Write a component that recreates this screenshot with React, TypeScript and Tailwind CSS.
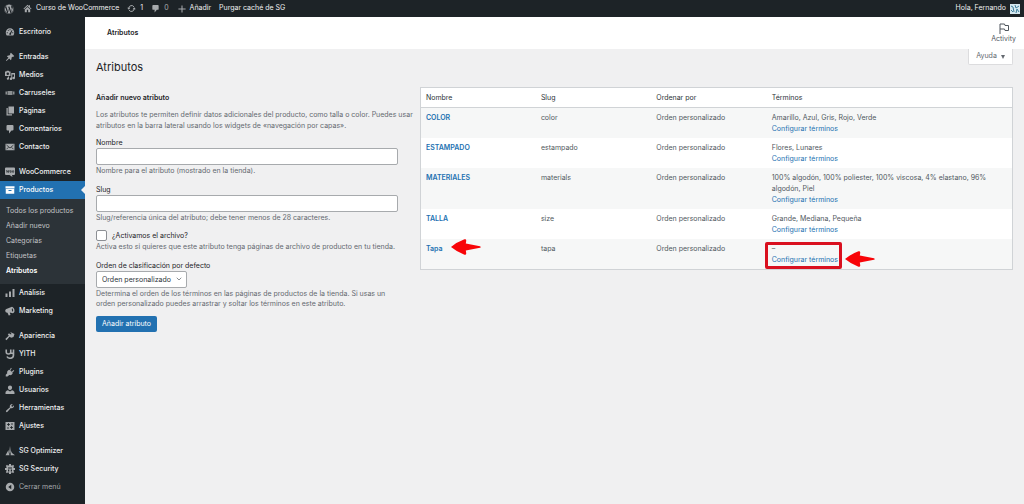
import React from 'react';
import { FaWordpress } from 'react-icons/fa';
import { ChevronDown } from 'lucide-react';

type IconName =
  | 'dashboard' | 'pin' | 'media' | 'carousel' | 'pages' | 'comment' | 'mail' | 'woo' | 'archive'
  | 'chart' | 'megaphone' | 'brush' | 'yith' | 'plug' | 'user' | 'wrench' | 'sliders' | 'optimizer'
  | 'security' | 'collapse' | 'home' | 'update' | 'plus';

const icons: Record<IconName, React.ReactNode> = {
  dashboard: (
    <path fillRule="evenodd" d="M10 2.500a8.500 8.500 0 0 0-8.500 8.500c0 2.400.8 4.500 2 6h13c1.200-1.500 2-3.600 2-6A8.500 8.500 0 0 0 10 2.500zM9 4.500h2v2H9zM5.300 6.500l1.500-1 1 1.500-1.500 1zM3.500 10.500h2v2h-2zM14.500 10.500h2v2h-2zM13.800 6l1 1.100-2.600 5.700a2 2 0 1 1-2.200-1z" />
  ),
  pin: <path d="M10.400 3l1.500-1.500 6.600 6.600L17 9.600c-1-.3-1.800-.1-2.500.4l-1.600 1.600c.4 1.700.2 3.200-1.200 4.700L8.400 13 3 18.200l-1.200-1.100L7 11.600 3.700 8.300C5.200 6.900 6.700 6.700 8.400 7.100L10 5.500c.6-.7.7-1.500.4-2.500z" />,
  media: (
    <path fillRule="evenodd" d="M0 3h2.500l1-1.500h4L8.500 3H11v9H0zm5.500 2a2.500 2.500 0 1 0 0 5 2.500 2.500 0 0 0 0-5zM12.500 6H20v10a2.500 2.500 0 1 1-2-2.400V9h-3.500v8.500a2.500 2.500 0 1 1-2-2.400zM6 13h2v4.500a2.200 2.200 0 1 1-2-2.300z" />
  ),
  carousel: <path d="M5 6h10v8H5zM1 7h3v6H1zM16 7h3v6h-3z" opacity=".8" />,
  pages: <path d="M7 1h11v14H7zM3 4h2.500v12.500H14V19H3z" />,
  comment: <path d="M5 2h10a2 2 0 0 1 2 2v7a2 2 0 0 1-2 2h-2l-5 6v-6H5a2 2 0 0 1-2-2V4a2 2 0 0 1 2-2z" />,
  mail: (
    <>
      <path d="M1 3.500h18v13H1z" />
      <path d="M3 6l7 6 7-6M3 14.500l4-4M17 14.500l-4-4" fill="none" stroke="#1d2327" strokeWidth="1.500" />
    </>
  ),
  woo: (
    <>
      <path d="M2 1h16a2 2 0 0 1 2 2v11a2 2 0 0 1-2 2h-4l1 4-6-4H2a2 2 0 0 1-2-2V3a2 2 0 0 1 2-2z" />
      <path d="M2.500 6l1.500 5 2-4 1 4 1.200-5M10 7.500h2.500v3H10zM15 7.500h2.500v3H15z" fill="none" stroke="#1d2327" strokeWidth="1.200" />
    </>
  ),
  archive: <path fillRule="evenodd" d="M1 2.500h18v4.500H1zM1.500 8h17v9.500h-17zm5.500 2v2h6v-2z" />,
  chart: <path d="M1 11h4v7H1zM8 7h4v11H8zM15 2h4v16h-4z" />,
  megaphone: (
    <path fillRule="evenodd" d="M14 1.500c3.500 1 5.500 5 5 9-.3 2-1.500 3.700-3.500 4L9.500 13l1.500 5-3.500 1L5 13.500c-2.500.2-4.500-1.500-4.500-4C.5 7 2 6 4 5.500zm.2 2.800c-1 1.500-.6 6 1.300 7 1.500-1.500.8-6-1.300-7z" />
  ),
  brush: <path d="M10.500 2l8.500 4-2 6-4.500 1.500-3.500-2-6 7-2.500-2.500 7-6.500L5.500 6l3-1L12 7l1-1z" />,
  yith: (
    <path d="M2.500 1v5c0 3 2 4 4.500 4s4.500-1.500 4.500-4V1m5.500 0v11c0 4-3 6.500-6.500 6.500S5 17.500 4 15M12 8c2 1 3.500 1 5 0" fill="none" stroke="currentColor" strokeWidth="3.200" />
  ),
  plug: <path d="M12 1.500L13.500 3 10.500 6.500 13.500 9.500 17 6l1.500 1.500-4 4 1 1c-1.500 3-4 4.500-7 3.500L5 19H1.500v-3.500l3-3c-1-3 .5-5.500 3.500-7l1 1z" />,
  user: <path d="M10 1a4.200 4.200 0 0 1 4.200 4.200c0 2.300-1.500 4.800-4.200 4.800S5.800 7.500 5.800 5.200A4.200 4.200 0 0 1 10 1zM6 10.500l4 2.500 4-2.500c3 .5 5 2.500 5 5V18H1v-2.500c0-2.500 2-4.500 5-5z" />,
  wrench: <path d="M16.700 9c-1.500 1.500-3.500 1.800-5.200 1L5 17.500c-1 1-2 1-2.700.2-.8-.7-.8-1.700.2-2.700L10 8.500C9.200 6.800 9.500 4.800 11 3.300c1.300-1.300 3-1.700 4.600-1.200L12.800 5l.5 1.800 1.800.5L18 4.400c.4 1.600 0 3.300-1.300 4.600z" />,
  sliders: (
    <>
      <path d="M1 2h18v16H1z" />
      <path d="M4 7h6M7 4v6M12 6h4M4 14h4M10 13h6M13 10v6" fill="none" stroke="#1d2327" strokeWidth="1.600" />
    </>
  ),
  optimizer: <path d="M10 0l1.500 12L10 17 8.500 12zM7 8l.5 6L9 18.500H1zM13 10l1 4 6 4.500h-9z" />,
  security: (
    <path fillRule="evenodd" d="M8 0h4v2.500l2 .8L16 1.500 18.500 4l-1.800 2 .8 2H20v4h-2.500l-.8 2 1.800 2-2.500 2.500-2-1.800-2 .8V20H8v-2.500l-2-.8-2 1.800L1.500 16l1.800-2-.8-2H0V8h2.500l.8-2L1.500 4 4 1.500l2 1.800 2-.8zM6 7v2h8V7zm0 4v4h2.500v-4zm5.500 0v4H14v-4z" />
  ),
  collapse: <path fillRule="evenodd" d="M10 1.500a8.500 8.500 0 1 1 0 17 8.500 8.500 0 0 1 0-17zM12.500 5.500L6.500 10l6 4.500z" />,
  home: <path fillRule="evenodd" d="M10 1.500l3 3V2.500h2.500V7L19 10.500l-1.500 1.300L10 4.600l-7.500 7.200L1 10.500zM10 6.500l6 5.500v6.500h-4.500V13h-3v5.500H4V12z" />,
  update: (
    <>
      <path d="M4 9a6.200 6.200 0 0 1 11.500-2.500M16 11a6.200 6.200 0 0 1-11.500 2.500" stroke="currentColor" strokeWidth="2.200" fill="none" />
      <path d="M.5 8.500h7L4 12.800zM12.500 11.500h7L16 7.200z" />
    </>
  ),
  plus: <path d="M8.700 1h2.600v7.700H19v2.600h-7.700V19H8.700v-7.700H1V8.700h7.700z" />,
};

const Icon: React.FC<{ name: IconName; className?: string }> = ({ name, className = 'w-[10px] h-[10px]' }) => (
  <svg viewBox="0 0 20 20" fill="currentColor" aria-hidden="true" className={`shrink-0 ${className}`}>
    {icons[name]}
  </svg>
);

interface MenuItem {
  label: string;
  icon: IconName;
}

const menuGroups: MenuItem[][] = [
  [{ label: 'Escritorio', icon: 'dashboard' }],
  [
    { label: 'Entradas', icon: 'pin' },
    { label: 'Medios', icon: 'media' },
    { label: 'Carruseles', icon: 'carousel' },
    { label: 'Páginas', icon: 'pages' },
    { label: 'Comentarios', icon: 'comment' },
    { label: 'Contacto', icon: 'mail' },
  ],
  [
    { label: 'WooCommerce', icon: 'woo' },
    { label: 'Productos', icon: 'archive' },
    { label: 'Análisis', icon: 'chart' },
    { label: 'Marketing', icon: 'megaphone' },
  ],
  [
    { label: 'Apariencia', icon: 'brush' },
    { label: 'YITH', icon: 'yith' },
    { label: 'Plugins', icon: 'plug' },
    { label: 'Usuarios', icon: 'user' },
    { label: 'Herramientas', icon: 'wrench' },
    { label: 'Ajustes', icon: 'sliders' },
  ],
  [
    { label: 'SG Optimizer', icon: 'optimizer' },
    { label: 'SG Security', icon: 'security' },
  ],
];

const submenu = ['Todos los productos', 'Añadir nuevo', 'Categorías', 'Etiquetas', 'Atributos'];

const attributes = [
  { name: 'COLOR', slug: 'color', terms: 'Amarillo, Azul, Gris, Rojo, Verde' },
  { name: 'ESTAMPADO', slug: 'estampado', terms: 'Flores, Lunares' },
  { name: 'MATERIALES', slug: 'materials', terms: '100% algodón, 100% poliester, 100% viscosa, 4% elastano, 96% algodón, Piel' },
  { name: 'TALLA', slug: 'size', terms: 'Grande, Mediana, Pequeña' },
  { name: 'Tapa', slug: 'tapa', terms: '–' },
];

const RedArrow: React.FC = () => (
  <svg viewBox="0 0 30 16" aria-hidden="true" className="w-[30px] h-4">
    <path d="M0 8Q6 3 13.500.3Q15.500-.2 15.200 2L14.800 4.600 29 7.200Q30.500 8 29 8.800L14.800 11.400 15.200 14Q15.500 16.200 13.500 15.700Q6 13 0 8Z" fill="#f80408" />
  </svg>
);

const AdminBar: React.FC = () => (
  <header className="flex items-center h-[17px] px-1 bg-[#1d2327] text-[#f0f0f1] text-[7px]">
    <a href="#wp" aria-label="WordPress" className="text-[#a7aaad]"><FaWordpress className="w-[10px] h-[10px]" /></a>
    <a href="#site" className="flex items-center gap-1 ml-[9px]">
      <Icon name="home" className="w-[9px] h-[9px] text-[#a7aaad]" /> Curso de WooCommerce
    </a>
    <a href="#updates" className="flex items-center gap-1 ml-2">
      <Icon name="update" className="w-[9px] h-[9px] text-[#a7aaad]" /> 1
    </a>
    <a href="#comments" className="flex items-center gap-1 ml-2 text-[#a7aaad]">
      <Icon name="comment" className="w-[9px] h-[9px]" /> 0
    </a>
    <a href="#new" className="flex items-center gap-1 ml-[9px]">
      <Icon name="plus" className="w-[8px] h-[8px] text-[#a7aaad]" /> Añadir
    </a>
    <a href="#purge" className="ml-2">Purgar caché de SG</a>
    <a href="#me" className="flex items-center gap-1 ml-auto">
      Hola, Fernando
      <svg viewBox="0 0 10 10" aria-hidden="true" className="w-[10px] h-[10px]">
        <path d="M0 0h10v10H0z" fill="#d5e8f0" />
        <path d="M1 2l2 1 1 5M5 1l1 3 3-2M6 9l1-4 2 3M1 6l2 2" stroke="#3f7f9c" fill="none" />
      </svg>
    </a>
  </header>
);

const Sidebar: React.FC = () => (
  <nav className="w-[85px] shrink-0 pt-[6px] bg-[#1d2327] text-[#f0f0f1] text-[7px] font-medium">
    {menuGroups.map((group, i) => (
      <ul key={i} className="mb-[7px]">
        {group.map((item) => {
          const active = item.label === 'Productos';
          return (
            <li key={item.label}>
              <a
                href="#menu"
                className={`relative flex items-center gap-1 h-[18px] pl-[5px] ${active ? 'bg-[#2271b1] text-white' : ''}`}
              >
                <Icon name={item.icon} className={`w-[10px] h-[10px] ${active ? 'text-white' : 'text-[#a7aaad]'}`} />
                {item.label}
                {active && (
                  <span className="absolute right-0 top-[5px] border-y-4 border-r-4 border-y-transparent border-r-[#f0f0f1]"></span>
                )}
              </a>
              {active && (
                <ul className="py-[5px] bg-[#2c3338] font-normal text-[#c3c4c7]">
                  {submenu.map((label) => (
                    <li key={label}>
                      <a
                        href="#submenu"
                        className={`flex items-center h-[15px] pl-[6px] ${label === 'Atributos' ? 'font-semibold text-white' : ''}`}
                      >
                        {label}
                      </a>
                    </li>
                  ))}
                </ul>
              )}
            </li>
          );
        })}
      </ul>
    ))}
    <button type="button" className="flex items-center gap-1 h-[18px] pl-[5px] -mt-[7px] font-normal text-[#a7aaad]">
      <Icon name="collapse" /> Cerrar menú
    </button>
  </nav>
);

const AttributeForm: React.FC = () => (
  <form className="text-[7px] leading-[10px] text-[#646970]" onSubmit={(e) => e.preventDefault()}>
    <h2 className="font-semibold text-[#1d2327]">Añadir nuevo atributo</h2>
    <p className="mt-[6px] leading-[11px]">
      Los atributos te permiten definir datos adicionales del producto, como talla o color. Puedes usar
      atributos en la barra lateral usando los widgets de «navegación por capas».
    </p>
    <div className="w-[94%]">
      <div className="mt-[7px]">
        <label htmlFor="name" className="block text-[#1d2327]">Nombre</label>
        <input id="name" type="text" className="block w-full h-[17px] px-1 bg-white border border-[#a7aaad] rounded-xs" />
        <p className="mt-px">Nombre para el atributo (mostrado en la tienda).</p>
      </div>
      <div className="mt-[9px]">
        <label htmlFor="slug" className="block text-[#1d2327]">Slug</label>
        <input id="slug" type="text" className="block w-full h-[17px] px-1 bg-white border border-[#a7aaad] rounded-xs" />
        <p className="mt-px">Slug/referencia única del atributo; debe tener menos de 28 caracteres.</p>
      </div>
      <div className="mt-[7px]">
        <div className="flex items-center gap-[5px]">
          <input id="public" type="checkbox" className="appearance-none w-[11px] h-[11px] bg-white border border-[#8c8f94] rounded-xs" />
          <label htmlFor="public" className="text-[#1d2327]">¿Activamos el archivo?</label>
        </div>
        <p className="mt-px">Activa esto si quieres que este atributo tenga páginas de archivo de producto en tu tienda.</p>
      </div>
      <div className="mt-[9px]">
        <label htmlFor="order" className="block text-[#1d2327]">Orden de clasificación por defecto</label>
        <div className="relative w-fit">
          <select id="order" className="block appearance-none h-[17px] w-[91px] pl-[5px] text-[7px] leading-[12px] bg-white text-[#2c3338] border border-[#a7aaad] rounded-xs">
            <option>Orden personalizado</option>
          </select>
          <ChevronDown className="absolute right-1 top-1 w-2 h-2 text-[#50575e] pointer-events-none" />
        </div>
        <p className="mt-px">
          Determina el orden de los términos en las páginas de productos de la tienda. Si usas un
          orden personalizado puedes arrastrar y soltar los términos en este atributo.
        </p>
      </div>
    </div>
    <button type="submit" className="h-4 mt-[7px] px-[6px] rounded-xs bg-[#2271b1] text-white">
      Añadir atributo
    </button>
  </form>
);

const AttributeTable: React.FC = () => (
  <table className="w-full table-fixed border border-[#d0d3d6] bg-white text-left text-[7px] leading-[11px] text-[#50575e]">
    <thead>
      <tr className="border-b border-[#d0d3d6] text-[#2c3338]">
        <th className="w-[19.5%] py-1 pl-[5px] font-normal">Nombre</th>
        <th className="w-[19.5%] py-1 pl-[5px] font-normal">Slug</th>
        <th className="w-[19.5%] py-1 pl-[5px] font-normal">Ordenar por</th>
        <th className="py-1 pl-[5px] font-normal">Términos</th>
      </tr>
    </thead>
    <tbody>
      {attributes.map((attr) => {
        const marked = attr.name === 'Tapa';
        return (
          <tr key={attr.name} className="align-top odd:bg-[#f6f7f7]">
            <td className="py-1 pl-[5px]">
              <div className="relative w-fit">
                <a href="#edit" className="font-semibold text-[#2271b1]">{attr.name}</a>
                {marked && <span className="absolute left-full -top-1 ml-2"><RedArrow /></span>}
              </div>
            </td>
            <td className="py-1 pl-[5px]">{attr.slug}</td>
            <td className="py-1 pl-[5px]">Orden personalizado</td>
            <td className="py-1 pl-[5px] pr-5">
              <div className="relative w-fit">
                {attr.terms}
                <br />
                <a href="#terms" className="text-[#2271b1]">Configurar términos</a>
                {marked && (
                  <>
                    <span className="absolute -left-[7px] -right-1 -top-px -bottom-1 border-3 border-[#d9101f] rounded-xs"></span>
                    <span className="absolute left-full top-2 ml-[7px]"><RedArrow /></span>
                  </>
                )}
              </div>
            </td>
          </tr>
        );
      })}
    </tbody>
  </table>
);

const App: React.FC = () => {
  return (
    <div className="flex flex-col min-h-screen bg-[#f0f0f1] font-['Inter',sans-serif]">
      <AdminBar />
      <div className="flex flex-1">
        <Sidebar />
        <main className="flex-1 min-w-0">
          {/* Page header */}
          <div className="flex items-center justify-between h-8 pl-[22px] pr-2 bg-white">
            <span className="text-[7px] font-semibold text-[#1d2327]">Atributos</span>
            <button type="button" className="flex flex-col items-center text-[7px] leading-[10px] text-[#50575e]">
              <svg viewBox="0 0 12 12" aria-hidden="true" className="w-3 h-3">
                <path d="M2 12V2H6.500l.5 1.500h3.500v5H7L6.500 7H2" fill="none" stroke="currentColor" />
              </svg>
              Activity
            </button>
          </div>

          <div className="px-[11px]">
            <div className="flex items-start justify-between">
              <h1 className="mt-[10px] text-[11px] leading-4 text-[#1d2327]">Atributos</h1>
              <button type="button" className="flex items-center justify-center gap-1 w-[45px] h-4 bg-white border border-t-0 border-[#dcdcde] rounded-b-xs text-[7px] text-[#646970]">
                Ayuda
                <span className="border-x-2 border-t-4 border-x-transparent border-t-[#646970]"></span>
              </button>
            </div>
            <div className="flex mt-3">
              <div className="w-[35%] shrink-0 pt-[6px]">
                <AttributeForm />
              </div>
              <div className="flex-1 pl-[3px]">
                <AttributeTable />
              </div>
            </div>
          </div>
        </main>
      </div>
    </div>
  );
};

export default App;
